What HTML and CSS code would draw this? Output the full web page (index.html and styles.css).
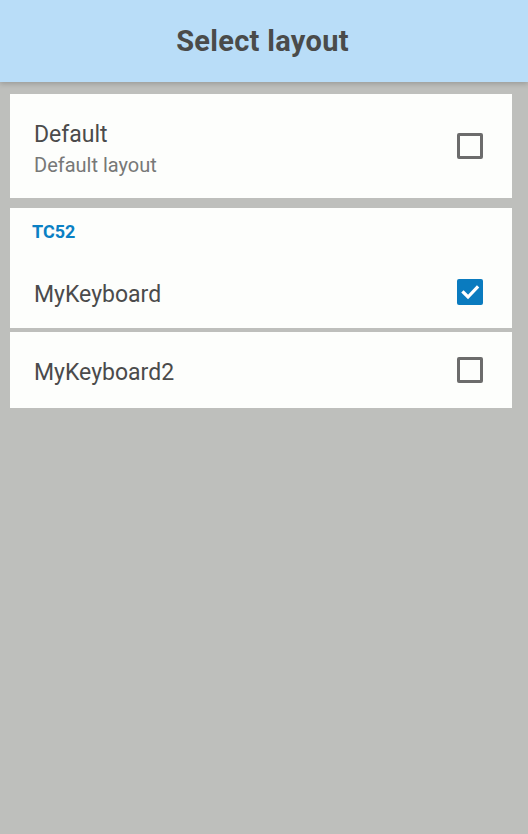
FILE: index.html
```html
<!DOCTYPE html>
<html>
<head>
<meta charset="utf-8">
<link rel="stylesheet" href="styles.css">
</head>
<body>
<header class="appbar"><h1 class="title">Select layout</h1></header>
<main class="list">
  <section class="card">
    <div class="row row-two">
      <div class="texts">
        <div class="primary">Default</div>
        <div class="secondary">Default layout</div>
      </div>
      <span class="checkbox"></span>
    </div>
  </section>
  <section class="card card-group">
    <div class="group-label">TC52</div>
    <div class="row row-one">
      <div class="primary">MyKeyboard</div>
      <span class="checkbox checked">
        <svg viewBox="0 0 26 26" width="26" height="26"><path d="M6.5 13.5 L11 18 L20 8.5" fill="none" stroke="#fff" stroke-width="3.2" stroke-linecap="square"/></svg>
      </span>
    </div>
  </section>
  <section class="card card-last">
    <div class="row row-last">
      <div class="primary">MyKeyboard2</div>
      <span class="checkbox"></span>
    </div>
  </section>
</main>
</body>
</html>
```
FILE: styles.css
```css
html, body {
  margin: 0;
  padding: 0;
  height: 100%;
}
body {
  background: #bebfbc;
  font-family: Roboto, "Noto Sans", sans-serif;
}
.appbar {
  height: 82px;
  background: #b9ddf8;
  box-shadow: 0 2px 5px rgba(0,0,0,0.18);
  display: flex;
  align-items: center;
  justify-content: center;
  position: relative;
  z-index: 1;
}
.title {
  margin: 0 0 0 -3px;
  font-size: 29px;
  line-height: 34px;
  font-weight: 700;
  letter-spacing: 0.3px;
  color: #4a4b4a;
}
.list {
  padding: 12px 16px 0 10px;
  display: flex;
  flex-direction: column;
  gap: 10px;
}
.card {
  background: #fdfefc;
}
.card-last {
  margin-top: -6px;
}
.row {
  display: flex;
  align-items: center;
  justify-content: space-between;
  padding: 0 29px 0 24px;
}
.row-two {
  height: 104px;
}
.texts {
  display: flex;
  flex-direction: column;
  gap: 4px;
  margin-top: 5px;
}
.primary {
  font-size: 23px;
  line-height: 28px;
  color: #4b4b4b;
}
.row-one .primary,
.row-last .primary {
  margin-top: 5px;
}
.secondary {
  font-size: 20px;
  line-height: 24px;
  color: #777877;
}
.card-group {
  height: 120px;
}
.group-label {
  padding: 13px 0 14px 22px;
  font-size: 18px;
  line-height: 21px;
  font-weight: 700;
  color: #0a80c4;
}
.row-one {
  height: 72px;
}
.row-last {
  height: 76px;
}
.checkbox {
  box-sizing: border-box;
  width: 26px;
  height: 26px;
  border: 3px solid #6c6c6c;
  border-radius: 2px;
  display: flex;
}
.checkbox.checked {
  border: none;
  background: #0a7bbf;
}
.checkbox svg {
  display: block;
}
```
